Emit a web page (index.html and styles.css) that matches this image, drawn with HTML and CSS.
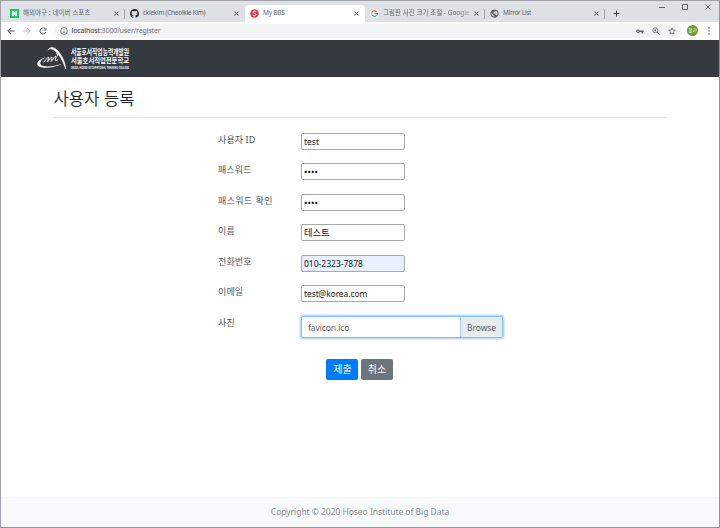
FILE: index.html
```html
<!DOCTYPE html>
<html lang="ko">
<head>
<meta charset="utf-8">
<title>My BBS</title>
<link rel="stylesheet" href="styles.css">
</head>
<body>
<div class="window">
  <header class="tabs">
    <div class="tab">
      <svg class="fav" viewBox="0 0 9 9"><rect width="9" height="9" fill="#0bd05c"/><path d="M2 2h2l1.400 2V2H7v5H5.200L3.700 5v2H2z" fill="#fff"/></svg>
      <span class="tab-title t1">해외야구 : 네이버 스포츠</span>
      <svg class="close" viewBox="0 0 5 5"><path d="M.5.5l4 4M4.500.5l-4 4"/></svg>
    </div>
    <div class="tab split">
      <svg class="fav" viewBox="0 0 16 16"><path fill="#24292e" d="M8 0C3.580 0 0 3.580 0 8c0 3.540 2.290 6.530 5.470 7.590.4.070.55-.17.55-.38 0-.19-.01-.82-.01-1.490-2.010.37-2.530-.49-2.690-.94-.09-.23-.48-.94-.82-1.130-.28-.15-.68-.52-.01-.53.63-.01 1.080.58 1.230.82.72 1.210 1.870.87 2.330.66.070-.52.28-.87.51-1.070-1.780-.2-3.640-.89-3.640-3.950 0-.87.31-1.590.82-2.150-.08-.2-.36-1.020.08-2.120 0 0 .67-.21 2.200.82a7.600 7.600 0 014 0c1.530-1.040 2.200-.82 2.200-.82.44 1.100.16 1.920.08 2.120.51.56.82 1.270.82 2.150 0 3.070-1.870 3.750-3.650 3.950.29.25.54.73.54 1.480 0 1.070-.01 1.930-.01 2.200 0 .21.15.46.55.38A8 8 0 0016 8c0-4.420-3.580-8-8-8z"/></svg>
      <span class="tab-title t2">ckiekim (Cheolkie Kim)</span>
      <svg class="close" viewBox="0 0 5 5"><path d="M.5.5l4 4M4.500.5l-4 4"/></svg>
    </div>
    <div class="tab active">
      <svg class="fav" viewBox="0 0 9 9"><circle cx="4.500" cy="4.500" r="4.300" fill="#e63a4b"/><path d="M6.200 2.700C5 1.700 3 2.200 3.100 3.400c.1 1.200 3 .8 3 2.200C6 7 3.900 7.100 2.700 6.100" fill="none" stroke="#fff" stroke-width="1"/></svg>
      <span class="tab-title t3">My BBS</span>
      <svg class="close" viewBox="0 0 5 5"><path d="M.5.5l4 4M4.500.5l-4 4"/></svg>
    </div>
    <div class="tab">
      <svg class="fav" viewBox="0 0 9 9"><circle cx="4.500" cy="4.500" r="4.500" fill="#fff"/><g fill="none" stroke-width="1.200"><path d="M6.500 2.500A2.900 2.900 0 0 0 2 3.200" stroke="#ea4335"/><path d="M2 3.200a2.900 2.900 0 0 0 0 2.700" stroke="#fbbc05"/><path d="M2 5.900a2.900 2.900 0 0 0 4.400.7" stroke="#34a853"/><path d="M6.400 6.600A2.900 2.900 0 0 0 7.400 4.600H4.600" stroke="#4285f4"/></g></svg>
      <span class="tab-title t4">그림판 사진 크기 조절 - Google</span>
      <svg class="close" viewBox="0 0 5 5"><path d="M.5.5l4 4M4.500.5l-4 4"/></svg>
    </div>
    <div class="tab split">
      <svg class="fav globe" viewBox="0 0 24 24"><path fill="#5f6368" d="M12 1a11 11 0 1 0 0 22 11 11 0 0 0 0-22zm-1 18.900A8 8 0 0 1 4.200 10.200L9 15v1a2 2 0 0 0 2 2zm6.900-2.500A2 2 0 0 0 16 16h-1v-3a1 1 0 0 0-1-1H8v-2h2a1 1 0 0 0 1-1V7h2a2 2 0 0 0 2-2v-.4a8 8 0 0 1 2.900 12.800z"/></svg>
      <span class="tab-title t5">Mirror List</span>
      <svg class="close" viewBox="0 0 5 5"><path d="M.5.5l4 4M4.500.5l-4 4"/></svg>
    </div>
    <div class="new-tab split"><svg width="7" height="7" viewBox="0 0 7 7"><path d="M3.500.5v6M.5 3.500h6" stroke="#3c4043"/></svg></div>
    <div class="controls">
      <svg viewBox="0 0 6 6"><path d="M0 3.500h6"/></svg>
      <svg viewBox="0 0 6 6"><path d="M.5.5h5v5h-5z"/></svg>
      <svg viewBox="0 0 6 6"><path d="M.4.4l5.200 5.200M5.600.4L.4 5.600"/></svg>
    </div>
  </header>
  <nav class="toolbar">
    <svg class="nav-ico" viewBox="0 0 8 8"><path d="M7.700 4H.8M4 .8L.8 4 4 7.200"/></svg>
    <svg class="nav-ico dim" viewBox="0 0 8 8"><path d="M.3 4h6.900M4 .8L7.200 4 4 7.200"/></svg>
    <svg class="nav-ico" viewBox="0 0 8 8"><path d="M6.700 2.300A3.100 3.100 0 1 0 7 5"/><path d="M7.400.7v2.700H4.700z" fill="#505357" stroke="none"/></svg>
    <div class="omnibox">
      <svg class="info" viewBox="0 0 8 8"><circle cx="4" cy="4" r="3.400"/><path d="M4 3.600v2.300M4 2v.8"/></svg>
      <span class="url"><b>localhost</b>:3000/user/register</span>
      <svg class="key" viewBox="0 0 8 6"><path d="M3.600 2.400a1.800 1.800 0 1 0 0 1.600h1.900v1.400H7V4h.7V2.400zM2 4a.8.8 0 1 1 0-1.600A.8.8 0 0 1 2 4z" fill="#5f6368" fill-rule="evenodd"/></svg>
      <svg class="line-ico" viewBox="0 0 8 8"><circle cx="3.300" cy="3.300" r="2.500"/><path d="M5.200 5.200l2.300 2.300M2.200 3.300h2.200M3.300 2.200v2.200"/></svg>
      <svg class="line-ico" viewBox="0 0 8 8"><path d="M4 .8l1 2.200 2.300.2-1.800 1.600.6 2.300L4 5.900 1.900 7.100l.6-2.300L.7 3.200 3 3z"/></svg>
    </div>
    <span class="avatar">철기</span>
    <svg class="more" viewBox="0 0 2 8"><circle cx="1" cy="1" r=".8"/><circle cx="1" cy="4" r=".8"/><circle cx="1" cy="7" r=".8"/></svg>
  </nav>
  <div class="navbar">
    <svg class="logo" width="100" height="30" viewBox="0 0 100 30">
      <path d="M11.200 4.200C12.500.2 17 .7 20.500 4.500c4.500 4.800 7.600 11.700 8.200 18.400C26 15 22.800 9 18.600 5.300 15.400 2.500 12.400 1.900 11.200 4.200z" fill="#fff" stroke="#fff" stroke-width=".6"/>
      <path d="M9.500 11C3 12.700-.4 16 .4 18.700c1.300 4.200 14.200 4.200 25.400-.9-9.700 3-20.600 3.700-22.300.4C2.500 16 4.800 13.100 9.500 11z" fill="#fff"/>
      <path d="M6.500 16.500l4.200-5q1.500-.8 1 1l-1.200 3.300 3.500-4.300q1.500-1 1 1l-1 3 4-5q1.500-1 1 .8l-.8 3q0 1.200 3-.8" fill="none" stroke="#fff" stroke-width=".9"/>
      <path d="M19 7.500l2.200 1.200-1.200 1.800" fill="none" stroke="#fff" stroke-width=".9"/>
      <g class="logo-text" fill="#fff">
        <text x="34" y="9.400" font-size="7.600" textLength="58" lengthAdjust="spacingAndGlyphs">서울호서직업능력개발원</text>
        <text x="34" y="17.200" font-size="6.400" textLength="58" lengthAdjust="spacingAndGlyphs">서울호서직업전문학교</text>
        <text x="34" y="22.800" font-size="3.600" textLength="58" lengthAdjust="spacingAndGlyphs">SEOUL HOSEO OCCUPATIONAL TRAINING COLLEGE</text>
      </g>
    </svg>
  </div>
  <main class="page">
    <h1>사용자 등록</h1>
    <form class="form">
      <div class="row"><label>사용자 ID</label><div class="field">test</div></div>
      <div class="row"><label>패스워드</label><div class="field dots">••••</div></div>
      <div class="row"><label class="wide">패스워드 확인</label><div class="field dots">••••</div></div>
      <div class="row"><label>이름</label><div class="field ko">테스트</div></div>
      <div class="row"><label>전화번호</label><div class="field filled">010-2323-7878</div></div>
      <div class="row"><label>이메일</label><div class="field mail">test@korea.com</div></div>
      <div class="row"><label>사진</label><div class="file"><span class="file-name">favicon.ico</span><span class="browse">Browse</span></div></div>
      <div class="actions"><button type="button" class="btn primary">제출</button><button type="button" class="btn secondary">취소</button></div>
    </form>
  </main>
  <footer class="footer"><span>Copyright © 2020 Hoseo Institute of Big Data</span></footer>
</div>
</body>
</html>
```
FILE: styles.css
```css
* { box-sizing: border-box; }
body { margin: 0; font-family: "Noto Sans", "Noto Sans CJK KR", sans-serif; color: #212529; }
svg { display: block; flex: none; }
.window { width: 720px; height: 528px; display: flex; flex-direction: column; background: #fff; border: 1px solid #a0a1a8; border-right-color: #8d93a6; border-bottom-color: #829bab; overflow: hidden; }
.tabs { height: 21px; flex: none; display: flex; align-items: flex-end; background: #dee1e6; padding-left: 4px; }
.tab { width: 120px; height: 17px; display: flex; align-items: center; padding: 0 5px 1px; position: relative; }
.tab.active { background: #fff; border-radius: 4px 4px 0 0; }
.split::before { content: ""; position: absolute; left: -1px; top: 4px; width: 1px; height: 10px; background: #a5a8ad; }
.fav { width: 9px; height: 9px; margin-right: 4px; }
.tab-title { width: 89px; margin-right: 2px; font-size: 6.500px; line-height: 12px; color: #5f6368; white-space: nowrap; }
.t1 { letter-spacing: .05px; }
.t2 { letter-spacing: -.28px; }
.t3 { letter-spacing: -.2px; }
.t4 { letter-spacing: .02px; -webkit-mask-image: linear-gradient(90deg, #000 84%, rgba(0,0,0,.2) 100%); mask-image: linear-gradient(90deg, #000 84%, rgba(0,0,0,.2) 100%); }
.t5 { letter-spacing: -.34px; }
.close { width: 5px; height: 5px; }
.close path { stroke: #3c4043; stroke-width: 1; }
.new-tab { position: relative; height: 17px; padding: 5px 0 0 8px; }
.controls { margin-left: auto; align-self: flex-start; display: flex; gap: 17px; padding: 3px 8px 0 0; }
.controls svg { width: 6px; height: 6px; fill: none; stroke: #50545a; stroke-width: .9; }
.toolbar { height: 18px; flex: none; display: flex; align-items: center; padding: 0 9px 1px 6px; background: #fff; }
.nav-ico { width: 8px; height: 8px; margin-right: 8px; fill: none; stroke: #505357; stroke-width: 1; }
.nav-ico.dim { stroke: #b4b6b9; }
.omnibox { width: 627px; height: 14px; flex: none; display: flex; align-items: center; border-radius: 7px; background: #f1f3f4; padding: 0 6px 0 5px; }
.info { width: 8px; height: 8px; margin-right: 3.500px; fill: none; stroke: #5f6368; stroke-width: .8; }
.url { font-size: 7.200px; letter-spacing: -.22px; line-height: 13px; color: #75787c; margin-right: auto; }
.url b { font-weight: 400; color: #3c4043; }
.key { width: 8px; height: 6px; }
.line-ico { width: 8px; height: 8px; margin-left: 8px; fill: none; stroke: #5f6368; stroke-width: .8; }
.avatar { width: 11px; height: 11px; margin-left: 5px; border-radius: 50%; background: #689f38; color: #fff; font-size: 4.500px; line-height: 11px; text-align: center; }
.more { width: 2px; height: 8px; margin-left: auto; fill: #5f6368; }
.navbar { height: 37px; flex: none; background: #343a40; padding: 6px 0 0 36px; }
.logo { overflow: visible; }
.logo-text { font-family: "Noto Sans CJK KR", sans-serif; font-weight: 700; }
.page { flex: 1; padding: 9px 52px 0; }
h1 { margin: 0; height: 32px; font-family: "Noto Sans CJK KR", sans-serif; font-size: 16.600px; line-height: 24px; font-weight: 350; border-bottom: 1px solid #e8e8e9; padding-left: .6px; }
.form { padding: 14.500px 0 0 165px; }
.row { display: flex; height: 30.600px; }
label { width: 83px; font-size: 9px; line-height: 13px; color: #50555a; white-space: nowrap; letter-spacing: .1px; }
.wide { letter-spacing: .4px; }
.field { width: 104px; height: 17px; border: 1px solid #aaa; border-radius: 2px; padding: 1px 2px 0; font-size: 8.500px; line-height: 14px; color: #222; white-space: nowrap; }
.dots { font-size: 9px; letter-spacing: .1px; color: #000; }
.ko { font-size: 9.300px; }
.mail { letter-spacing: -.1px; }
.filled { background: #e8f0fe; }
.file { width: 202px; height: 21.500px; display: flex; border: 1px solid #80bdff; border-radius: 2px; box-shadow: 0 0 0 1.500px #bfdeff; font-size: 8.500px; line-height: 21px; color: #5a6168; }
.file-name { flex: 1; padding-left: 6px; letter-spacing: -.1px; }
.browse { width: 42px; background: #e9ecef; border-left: 1px solid #a9cdf0; text-align: center; letter-spacing: -.1px; }
.actions { display: flex; gap: 2.600px; padding: 12px 0 0 108.400px; }
.btn { width: 32px; height: 21px; border: 0; border-radius: 2px; padding: 0; font-family: "Noto Sans CJK KR", sans-serif; font-size: 10px; line-height: 20px; color: #fff; }
.primary { background: #007bff; }
.secondary { background: #6c757d; }
.footer { height: 30px; flex: none; background: #f8f9fa; color: #888c90; font-size: 8.500px; letter-spacing: -.04px; line-height: 30px; text-align: center; }
```
